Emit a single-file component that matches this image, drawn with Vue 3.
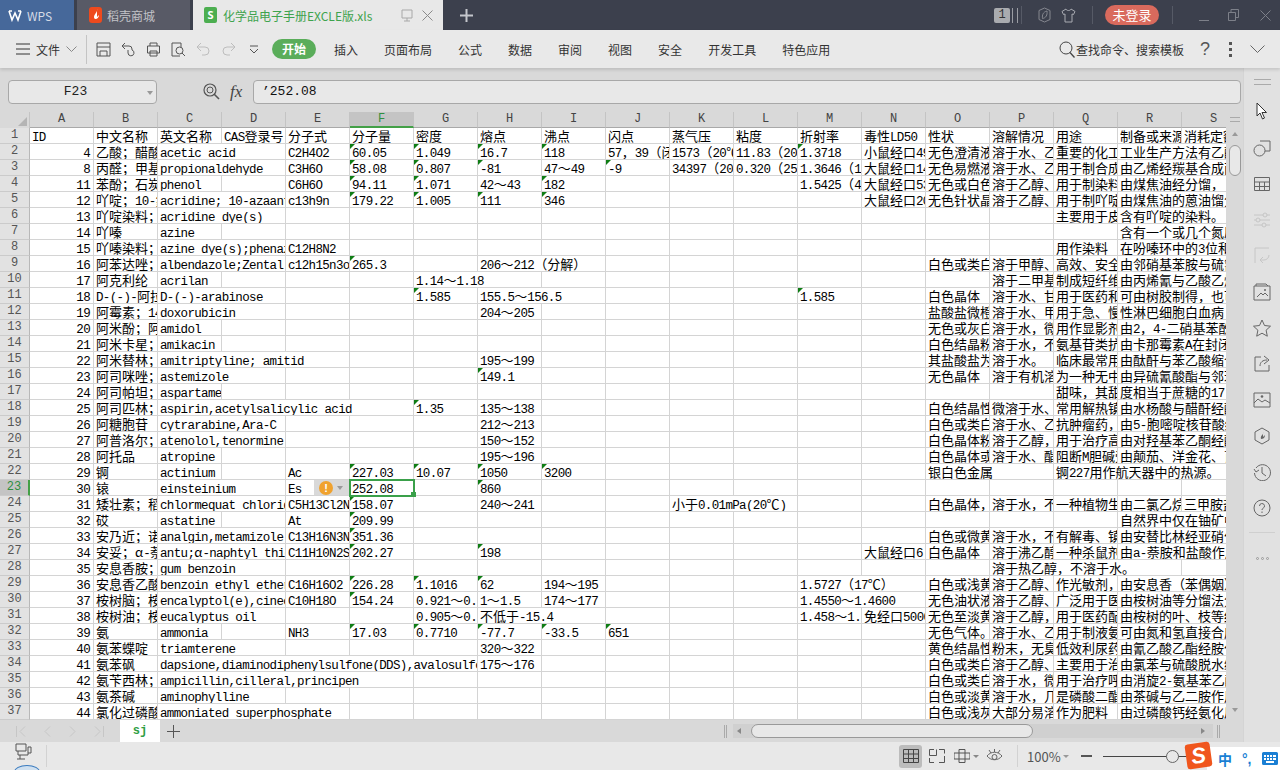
<template>
  <div class="app">
    <div class="titlebar">
      <div class="tab tab-wps">
        <svg width="14" height="14" viewBox="0 0 14 14"><path d="M1 3l3 9 3-7 3 7 3-9M1 3h3M10 3h3" fill="none" stroke="#fff" stroke-width="1.6"/></svg>
        <span>WPS</span>
      </div>
      <div class="tab tab-shop">
        <span class="shop-icon"><svg width="8" height="12" viewBox="0 0 8 12"><path d="M5 0C6 3 2 5 2 8c0 1 .6 2 1.5 2C5.500 10 7 8 7 6L5 8z" fill="#fff"/></svg></span>
        <span>稻壳商城</span>
      </div>
      <div class="tab tab-doc">
        <span class="doc-icon">S</span>
        <span class="doc-name">化学品电子手册EXCLE版.xls</span>
        <svg class="doc-mon" width="12" height="13" viewBox="0 0 12 13"><path d="M1 1h10v8H1zM6 9v3M3 12h6" fill="none" stroke="#a8a8a8"/></svg>
        <svg class="doc-x" width="11" height="11" viewBox="0 0 11 11"><path d="M.5.5l10 10M10.500.5l-10 10" stroke="#8a8a8a" fill="none"/></svg>
      </div>
      <svg class="plus" width="13" height="13" viewBox="0 0 13 13"><path d="M6.500 0v13M0 6.500h13" stroke="#c4c6cc" stroke-width="2" fill="none"/></svg>
      <div class="spring"></div>
      <span class="badge-one">1</span>
      <span class="stripes"></span>
      <span class="tb-div"></span>
      <svg class="tb-ic1" width="13" height="16" viewBox="0 0 13 16"><path d="M6.500 1L12 3.500v9L6.500 15 1 12.500v-9zM9 4C5 5 4 8 4.500 11.500 8 11 9.500 8 9 4z" fill="none" stroke="#85878f"/></svg>
      <svg class="tb-ic2" width="15" height="15" viewBox="0 0 15 15"><path d="M5 1L1 3.500l1.500 3L4 6v8h7V6l1.500.5L14 3.500 10 1c-.5 2-4.500 2-5 0z" fill="none" stroke="#a9abb2"/></svg>
      <span class="tb-div tb-div2"></span>
      <span class="login">未登录</span>
      <span class="tb-div tb-div3"></span>
      <svg class="win1" width="11" height="11" viewBox="0 0 11 11"><path d="M0 10.500h10" stroke="#7d8089"/></svg>
      <svg class="win2" width="11" height="12" viewBox="0 0 11 12"><path d="M.5 3.500h7v8h-7zM3 3.500V.5h7.500v8H7.500" fill="none" stroke="#7d8089"/></svg>
      <svg class="win3" width="11" height="11" viewBox="0 0 11 11"><path d="M.5.5l10 10M10.500.5l-10 10" stroke="#7d8089" fill="none"/></svg>
    </div>

    <div class="ribbon">
      <svg class="burger" width="15" height="12" viewBox="0 0 15 12"><path d="M0 1h14M0 6h14M0 11h14" stroke="#333" fill="none"/></svg>
      <span class="rb-file">文件</span>
      <svg class="rb-chev" width="11" height="6" viewBox="0 0 11 6"><path d="M.5.5l5 5 5-5" stroke="#888" fill="none"/></svg>
      <span class="rb-div"></span>
      <div class="qa">
        <svg width="15" height="15" viewBox="0 0 15 15"><path d="M1 1h13v13H1zM1 5h13M4 14V9h7v5" fill="none" stroke="#555"/></svg>
        <svg width="15" height="15" viewBox="0 0 15 15"><path d="M1 4h7a3 3 0 0 1 3 3v1a3 3 0 1 1-4 3V8M4 1L1 4l3 3" fill="none" stroke="#555"/></svg>
        <svg width="15" height="15" viewBox="0 0 15 15"><path d="M4 4V1h7v3M1.500 4h12v7h-12zM4 9h7v5H4z" fill="none" stroke="#555"/></svg>
        <svg width="15" height="15" viewBox="0 0 15 15"><path d="M9 14H1V1h9v4" fill="none" stroke="#555"/><circle cx="8.500" cy="8.500" r="3.500" fill="none" stroke="#555"/><path d="M11 11l3 3" stroke="#555"/></svg>
        <svg width="15" height="15" viewBox="0 0 15 15"><path d="M5 1L1 5l4 4M1 5h8a4 4 0 0 1 0 8H6" fill="none" stroke="#bdbdbd"/></svg>
        <svg width="15" height="15" viewBox="0 0 15 15"><path d="M10 1l4 4-4 4M14 5H6a4 4 0 0 0 0 8h3" fill="none" stroke="#bdbdbd"/></svg>
        <svg width="15" height="15" viewBox="0 0 15 15"><path d="M4 4h8M4 7l4 4 4-4" fill="none" stroke="#555"/></svg>
      </div>
      <span class="pill">开始</span>
      <nav class="menus">
        <span v-for="m in menus" :key="m">{{ m }}</span>
      </nav>
      <div class="spring"></div>
      <svg width="16" height="17" viewBox="0 0 16 17"><circle cx="7" cy="7" r="6" fill="none" stroke="#444"/><path d="M11 11.500l4.500 5" stroke="#444" stroke-width="1.300"/></svg>
      <span class="rb-search">查找命令、搜索模板</span>
      <span class="rb-help">?</span>
      <svg class="rb-dots" width="3" height="15" viewBox="0 0 3 15"><path d="M0 0h3v3H0zM0 6h3v3H0zM0 12h3v3H0z" fill="#555"/></svg>
      <svg class="rb-last" width="15" height="8" viewBox="0 0 15 8"><path d="M.5.5l7 7 7-7" stroke="#666" fill="none"/></svg>
    </div>

    <div class="body">
      <div class="main">
        <div class="formula">
          <div class="namebox"><span>F23</span><i class="nb-caret"></i></div>
          <svg class="fx-zoom" width="17" height="17" viewBox="0 0 17 17"><circle cx="7" cy="7" r="6" fill="none" stroke="#555" stroke-width="1.200"/><circle cx="7" cy="7" r="3" fill="none" stroke="#555"/><path d="M11 11l5 5" stroke="#555" stroke-width="1.600"/></svg>
          <span class="fx">fx</span>
          <div class="fx-input">’252.08</div>
        </div>

        <div class="sheet">
          <div class="sheet-area">
            <div class="heads">
              <div class="corner"><i></i></div>
              <span v-for="(l, i) in letters" :key="l" class="head" :class="{ on: i === 5 }">{{ l }}</span>
            </div>
            <div class="grid">
              <div v-for="(row, r) in rows" :key="r" class="row">
                <span class="rownum" :class="{ on: r === 22 }">{{ r + 1 }}</span>
                <span
                  v-for="cell in row"
                  :key="cell.col"
                  class="cell"
                  :class="{ tri: cell.tri, num: cell.num, sel: r === 22 && cell.col === 5 }"
                  :style="{ width: cell.span * 64 + 'px' }"
                >
                  <template v-for="(run, k) in cell.runs" :key="k"><span :class="run.cjk ? 'cjk' : 'asc'">{{ run.t }}</span></template>
                  <span v-if="r === 22 && cell.col === 4" class="warn">
                    <b>!</b><i></i>
                  </span>
                </span>
              </div>
            </div>
          </div>
          <div class="vscroll">
            <span class="v-grip"></span>
            <i class="v-up"></i>
            <span class="v-thumb"></span>
            <div class="spring"></div>
            <i class="v-down"></i>
          </div>
        </div>

        <div class="sheetbar">
          <div class="nav">
            <svg width="10" height="11" viewBox="0 0 10 11"><path d="M.5 0v11M9 .5l-5 5 5 5" fill="none" stroke="#c6c6c6"/></svg>
            <svg width="10" height="11" viewBox="0 0 10 11"><path d="M8 .5l-5 5 5 5" fill="none" stroke="#c6c6c6"/></svg>
            <svg width="10" height="11" viewBox="0 0 10 11"><path d="M2 .5l5 5-5 5" fill="none" stroke="#c6c6c6"/></svg>
            <svg width="10" height="11" viewBox="0 0 10 11"><path d="M9.500 0v11M1 .5l5 5-5 5" fill="none" stroke="#c6c6c6"/></svg>
          </div>
          <span class="sj">sj</span>
          <svg class="add" width="13" height="13" viewBox="0 0 13 13"><path d="M6.500 0v13M0 6.500h13" stroke="#555" fill="none"/></svg>
          <div class="spring"></div>
          <i class="h-grip"></i>
          <div class="hscroll">
            <i class="h-left"></i>
            <span class="h-thumb"></span>
            <div class="spring"></div>
            <i class="h-right"></i>
          </div>
          <i class="h-grip h-grip2"></i>
        </div>
      </div>

      <aside class="side">
        <span class="side-grip"></span>
        <svg class="cursor" width="12" height="18" viewBox="0 0 12 18"><path d="M1 1v13l3-3 2.500 6 2-1-2.500-5.500h4.500z" fill="#fff" stroke="#333"/></svg>
        <div class="side-icons">
          <svg width="18" height="18" viewBox="0 0 18 18"><circle cx="6.500" cy="11.500" r="5.500" fill="none" stroke="#666"/><path d="M7 2h10v10h-5" fill="none" stroke="#666"/></svg>
          <svg width="18" height="18" viewBox="0 0 18 18"><path d="M1.500 2.500h15v13h-15zM1.500 7h15M1.500 11.500h15M6.500 7v8.500M11.500 7v8.500" fill="none" stroke="#666"/></svg>
          <svg width="18" height="18" viewBox="0 0 18 18"><path d="M1 4h16M1 9h16M1 14h16" stroke="#c6c6c6" fill="none"/><circle cx="12" cy="4" r="2" fill="#e0e0e0" stroke="#c6c6c6"/><circle cx="5" cy="9" r="2" fill="#e0e0e0" stroke="#c6c6c6"/><circle cx="11" cy="14" r="2" fill="#e0e0e0" stroke="#c6c6c6"/></svg>
          <svg width="18" height="18" viewBox="0 0 18 18"><path d="M2 1h14M2 1v15M16 8a5 5 0 0 1-5 5H7M10 10l-3 3 3 3" fill="none" stroke="#c6c6c6"/></svg>
          <svg width="18" height="18" viewBox="0 0 18 18"><path d="M3 3V1h10l2 2M1 17V3h16v14zM4 14l4-4 2 2 2-2 3 3" fill="none" stroke="#666"/><circle cx="12" cy="7" r="1" fill="#666"/></svg>
          <svg width="18" height="18" viewBox="0 0 18 18"><path d="M9 1l2.500 5.500 6 .7-4.400 4 1.200 6L9 14.200 3.700 17.200l1.200-6-4.400-4 6-.7z" fill="none" stroke="#666"/></svg>
          <svg width="18" height="18" viewBox="0 0 18 18"><path d="M8 2H2v14h14v-6M7 11c0-4 3-6 7-6M11 1l5 4-5 4" fill="none" stroke="#666"/></svg>
          <svg width="18" height="18" viewBox="0 0 18 18"><path d="M1 2h16v14H1zM1 12l4-4 4 3 3-2 5 3" fill="none" stroke="#666"/><circle cx="9" cy="5.500" r="1.300" fill="#666"/></svg>
          <svg width="18" height="18" viewBox="0 0 18 18"><path d="M9 1l7 4v8l-7 4-7-4V5z" fill="none" stroke="#666"/><path d="M10 5c1 3-3 3-2 7 2 0 4-1 4-4l-2 2z" fill="#666"/></svg>
          <svg width="18" height="18" viewBox="0 0 18 18"><path d="M3 5a8 8 0 1 1-1.500 5M1 6l2 3 3-2M9 4v6l4 3" fill="none" stroke="#666"/></svg>
          <svg width="18" height="18" viewBox="0 0 18 18"><circle cx="9" cy="9" r="8" fill="none" stroke="#666"/><path d="M6.500 7a2.500 2.500 0 1 1 3.500 2.300c-.7.400-1 .9-1 1.700M9 12.500v1.500" fill="none" stroke="#666"/></svg>
        </div>
        <i class="side-line"></i>
        <div class="side-more"><i></i><i></i><i></i></div>
      </aside>
    </div>

    <div class="status">
      <svg class="st-ic" width="18" height="18" viewBox="0 0 18 18"><path d="M1 1h10v7H1zM3 8v4h10V4h3v6h-3M5 12v4M2 16h8" fill="none" stroke="#555"/></svg>
      <span class="st-bubble"></span>
      <span class="st-div"></span>
      <div class="spring"></div>
      <span class="view on"><svg width="16" height="14" viewBox="0 0 16 14"><path d="M.5.5h15v13H.5zM.5 5h15M.5 9.500h15M5.500.5v13M10.500.5v13" fill="none" stroke="#444"/></svg></span>
      <span class="view view2"><svg width="16" height="14" viewBox="0 0 16 14"><path d="M5 .5H.5v6h7v-6M10 .5h5.500v4M15.500 7v6.500H10M5 13.500H.5V9" fill="none" stroke="#555"/></svg></span>
      <span class="view view3"><svg width="16" height="14" viewBox="0 0 16 14"><path d="M5 .5h6v13H5zM0 4h16v6H0z" fill="none" stroke="#555"/></svg><i></i></span>
      <span class="view view4"><svg width="17" height="15" viewBox="0 0 17 15"><path d="M1 7c4-5 11-5 15 0-4 5-11 5-15 0zM3 1l2 3M8.500 0v3M14 1l-2 3" fill="none" stroke="#666"/><circle cx="8.500" cy="8" r="2.500" fill="none" stroke="#666"/></svg></span>
      <span class="st-div st-div2"></span>
      <span class="zoomtxt">100%</span><i class="zoomcaret"></i>
      <i class="minus"></i>
      <div class="slider"><i></i></div>
      <div class="ime">
        <span class="sogou"><b>S</b></span>
        <span class="ime-zh">中</span>
        <span class="ime-pt">°,</span>
        <svg width="16" height="13" viewBox="0 0 16 13"><path d="M0 1.500A1.500 1.500 0 0 1 1.500 0h13A1.500 1.500 0 0 1 16 1.500v10a1.500 1.500 0 0 1-1.500 1.500h-13A1.500 1.500 0 0 1 0 11.500z" fill="#1a7fd4"/><path d="M2 3h2v2H2zM5 3h2v2H5zM8 3h2v2H8zM11 3h3v2h-3zM2 6h2v2H2zM5 6h2v2H5zM8 6h2v2H8zM11 6h3v2h-3zM4 9h8v2H4z" fill="#fff"/></svg>
      </div>
    </div>
  </div>
</template>

<script setup>
const menus = ['插入', '页面布局', '公式', '数据', '审阅', '视图', '安全', '开发工具', '特色应用']
const letters = 'ABCDEFGHIJKLMNOPQRS'.split('')

// A..N # O..S, "|" between columns, "^" marks the green corner
const data = [
  'ID|中文名称|英文名称|CAS登录号|分子式|分子量|密度|熔点|沸点|闪点|蒸气压|粘度|折射率|毒性LD50（LD#性状|溶解情况|用途|制备或来源|消耗定额（吨）',
  '4|乙酸；醋酸|acetic acid||C2H4O2|^60.05|^1.049|^16.7|^118|57，39（闭杯）|1573（20℃）|11.83（20℃）|^1.3718|小鼠经口4960#无色澄清液体|溶于水、乙醇|重要的化工原料|工业生产方法有乙醛氧化',
  '8|丙醛；甲基乙醛|propionaldehyde||C3H6O|^58.08|^0.807|^-81|47～49|^-9|34397（20℃）|0.320（25℃）|1.3646（19℃）|大鼠经口1400#无色易燃液体|溶于水、乙醇|用于制合成树脂|由乙烯经羰基合成丙醛',
  '11|苯酚；石炭酸|phenol||C6H6O|^94.11|^1.071|42～43|^182||||1.5425（41℃）|大鼠经口530#无色或白色晶体|溶于乙醇、乙醚|用于制染料|由煤焦油经分馏，',
  '12|吖啶；10-氮杂蒽|acridine; 10-azaanthracene||c13h9n|^179.22|^1.005|^111|^346|||||大鼠经口2000#无色针状晶体|溶于乙醇、乙醚|用于制吖啶染料|由煤焦油的蒽油馏分中',
  '13|吖啶染料；|acridine dye(s)#||主要用于皮革|含有吖啶的染料。',
  '14|吖嗪|azine#|||含有一个或几个氮原子',
  '15|吖嗪染料；|azine dye(s);phenazine dyes||C12H8N2#||用作染料|在吩嗪环中的3位和7位',
  '16|阿苯达唑；|albendazole;Zental||c12h15n3o2s|^265.3||206～212（分解）#白色或类白色|溶于甲醇、冰醋酸|高效、安全的驱虫药|由邻硝基苯胺与硫氰酸',
  '17|阿克利纶|acrilan||||1.14～1.18#|溶于二甲基甲酰胺|制成短纤维|由丙烯氰与乙酸乙烯酯',
  '18|D-(-)-阿拉伯糖|D-(-)-arabinose||||^1.585|155.5～156.5|||||^1.585#白色晶体|溶于水、甘油|用于医药和食品|可由树胶制得，也可由',
  '19|阿霉素；14-羟|doxorubicin|||||204～205#盐酸盐微橙色|溶于水、甲醇|用于急、慢|性淋巴细胞白血病',
  '20|阿米酚；阿米多|amidol#无色或灰白色|溶于水，微溶|用作显影剂|由2，4-二硝基苯酚还原',
  '21|阿米卡星；|amikacin#白色结晶粉末|溶于水，不溶|氨基苷类抗生素|由卡那霉素A在封闭条件',
  '22|阿米替林；|amitriptyline; amitid|||||195～199#其盐酸盐为无色|溶于水。|临床最常用的|由酞酐与苯乙酸缩合',
  '23|阿司咪唑；|astemizole|||||^149.1#无色晶体|溶于有机溶剂|为一种无中枢|由异硫氰酸酯与邻苯二',
  '24|阿司帕坦；|aspartame#||甜味，其甜|度相当于蔗糖的17',
  '25|阿司匹林；|aspirin,acetylsalicylic acid||||^1.35|135～138#白色结晶性|微溶于水、|常用解热镇痛药|由水杨酸与醋酐经酯化',
  '26|阿糖胞苷|cytrarabine,Ara-C|||||212～213#白色或类白色|溶于水、乙醇|抗肿瘤药，|由5-胞嘧啶核苷酸经',
  '27|阿普洛尔；|atenolol,tenormine|||||150～152#白色晶体粉末|溶于乙醇，|用于治疗高血压|由对羟基苯乙酮经酯化',
  '28|阿托品|atropine|||||195～196#白色晶体或粉末|溶于水、酯类|阻断M胆碱受体|由颠茄、洋金花、莨菪',
  '29|锕|actinium||Ac|^227.03|^10.07|^1050|^3200#银白色金属||锕227用作航天器中的热源。',
  '30|锿|einsteinium||Es|252.08||^860',
  '31|矮壮素；稻|chlormequat chloride||C5H13Cl2N|^158.07||240～241|||小于0.01mPa(20℃)#白色晶体，|溶于水，不溶|一种植物生长|由二氯乙烷|三甲胺盐酸',
  '32|砹|astatine||At|^209.99#|||自然界中仅在铀矿中微量',
  '33|安乃近；诺|analgin,metamizole||C13H16N3NaO|^351.36#白色或微黄色|溶于水，不溶|有解毒、镇痛|由安替比林经亚硝化还原',
  '34|安妥；α-萘|antu;α-naphtyl thiourea||C11H10N2S|^202.27||^198||||||大鼠经口6#白色晶体|溶于沸乙醇中|一种杀鼠剂|由a-萘胺和盐酸作用',
  '35|安息香胺；|gum benzoin#|溶于热乙醇，不溶于水。',
  '36|安息香乙酸|benzoin ethyl ether||C16H16O2|^226.28|^1.1016|^62|194～195||||1.5727（17℃）#白色或浅黄色|溶于乙醇、乙醚|作光敏剂，|由安息香（苯偶姻）经',
  '37|桉树脑；桉|encalyptol(e),cineole||C10H18O|^154.24|0.921～0.923|1～1.5|174～177||||1.4550～1.4600#无色油状液体|溶于乙醇、乙醚|广泛用于医药|由桉树油等分馏法分离',
  '38|桉树油；桉|eucalyptus oil||||0.905～0.925|不低于-15.4|||||1.458～1.470|免经口5000#无色至淡黄色|溶于乙醇，不溶|用于医药配制|由桉树的叶、枝等经蒸',
  '39|氨|ammonia||NH3|^17.03|^0.7710|^-77.7|^-33.5|^651#无色气体。|溶于水、乙醇|用于制液氨|可由氮和氢直接合成。',
  '40|氨苯蝶啶|triamterene|||||320～322#黄色结晶性|粉末，无臭，|低效利尿药|由氰乙酸乙酯经胺化',
  '41|氨苯砜|dapsione,diaminodiphenylsulfone(DDS),avalosulfon|||||175～176#白色或类白色|溶于乙醇、丙酮|主要用于治疗|由氯苯与硫酸脱水缩合',
  '42|氨苄西林；|ampicillin,cilleral,principen#白色或类白色|溶于水，微溶|用于治疗呼吸|由消旋2-氨基苯乙酸',
  '43|氨茶碱|aminophylline#白色或淡黄色|溶于水，几乎|是磷酸二酯酶|由茶碱与乙二胺作用',
  '44|氯化过磷酸|ammoniated superphosphate#白色或浅灰色|大部分易溶于水|作为肥料|由过磷酸钙经氨化后'
]

const textWidth = (s) => {
  let w = 0
  for (const ch of s) w += ch.charCodeAt(0) < 128 ? 6.87 : 13
  return w
}

const toRuns = (s) =>
  (s.match(/[\x00-\x7f]+|[^\x00-\x7f]+/g) || []).map((t) => ({ t, cjk: t.charCodeAt(0) > 127 }))

const buildRow = (line, r) => {
  const [left, right = ''] = line.split('#')
  const f = new Array(19).fill('')
  left.split('|').forEach((t, i) => { f[i] = t })
  right.split('|').forEach((t, i) => { f[14 + i] = t })

  const cells = []
  for (let c = 0; c < 19; c++) {
    const tri = f[c].startsWith('^')
    const text = tri ? f[c].slice(1) : f[c]
    let span = 1
    if (text && c > 0) {
      const want = Math.ceil(textWidth(text) / 64)
      while (span < want && c + span < 19 && !f[c + span]) span++
    }
    cells.push({ col: c, tri, num: c === 0 && r > 0, span, runs: toRuns(text) })
    c += span - 1
  }
  return cells
}

const rows = data.map(buildRow)
</script>

<style>
html, body { margin: 0; background: #e8e8e8; overflow: hidden; }
</style>

<style scoped>
.app {
  width: 1280px;
  height: 770px;
  display: flex;
  flex-direction: column;
  overflow: hidden;
  font-family: "Noto Sans CJK SC", "Noto Sans", sans-serif;
  font-size: 12px;
  color: #333;
}
.spring { flex: 1; }

.titlebar {
  height: 30px;
  background: #3c404d;
  display: flex;
  align-items: center;
  flex: none;
}
.tab {
  height: 30px;
  display: flex;
  align-items: center;
  box-sizing: border-box;
}
.tab-wps {
  width: 74px;
  background: #46689a;
  color: #d5dbe6;
  padding-left: 8px;
  gap: 5px;
}
.tab-shop {
  width: 113px;
  margin-left: 3px;
  background: #585a66;
  color: #c2c3c8;
  padding-left: 12px;
  gap: 5px;
}
.shop-icon {
  width: 13px;
  height: 16px;
  background: #ee4a1d;
  border-radius: 3px;
  display: flex;
  align-items: center;
  justify-content: center;
}
.tab-doc {
  width: 250px;
  margin-left: 3px;
  background: #e8e8e8;
  padding-left: 11px;
}
.doc-icon {
  width: 13px;
  height: 16px;
  background: #4cae50;
  border-radius: 2px;
  color: #fff;
  font: 700 11px/16px "Noto Sans", sans-serif;
  text-align: center;
}
.doc-name { color: #3ea34d; margin-left: 6px; width: 178px; white-space: nowrap; }
.doc-x { margin-left: 9px; }
.plus { margin-left: 17px; }
.badge-one {
  width: 16px;
  height: 15px;
  background: #a9abaf;
  color: #333;
  border-radius: 2px;
  font: 12px/15px "Liberation Mono", monospace;
  text-align: center;
}
.stripes {
  width: 4px;
  height: 15px;
  margin-left: 2px;
  border-left: 1px solid #9a9ca3;
  border-right: 1px solid #9a9ca3;
}
.tb-div { width: 1px; height: 18px; background: #565a66; margin-left: 3px; }
.tb-ic1 { margin-left: 16px; }
.tb-ic2 { margin-left: 10px; }
.tb-div2 { margin-left: 16px; }
.login {
  width: 54px;
  height: 20px;
  margin-left: 12px;
  border-radius: 10px;
  background: #d96a5d;
  color: #fff;
  line-height: 20px;
  text-align: center;
  font-size: 13px;
}
.tb-div3 { margin-left: 13px; }
.win1 { margin-left: 26px; }
.win2 { margin-left: 18px; }
.win3 { margin-left: 21px; margin-right: 9px; }

.ribbon {
  height: 38px;
  flex: none;
  background: #e9e9e9;
  display: flex;
  align-items: center;
  position: relative;
  box-shadow: 0 2px 3px rgba(0, 0, 0, 0.12);
  z-index: 2;
}
.burger { margin-left: 16px; }
.rb-file { margin-left: 5px; font-size: 12px; }
.rb-chev { margin-left: 6px; }
.rb-div { width: 1px; height: 29px; background: #c4c4c4; margin-left: 9px; }
.qa { display: flex; gap: 10px; margin-left: 9px; align-items: center; }
.pill {
  width: 44px;
  height: 20px;
  margin-left: 11px;
  border-radius: 10px;
  background: #5aad5a;
  color: #fff;
  text-align: center;
  line-height: 20px;
  font-weight: 700;
}
.menus { display: flex; gap: 26px; margin-left: 18px; }
.rb-search { margin-left: 1px; margin-right: 14px; }
.rb-help { font: 18px "Liberation Sans", sans-serif; color: #555; width: 14px; text-align: center; }
.rb-dots { margin-left: 17px; }
.rb-last { margin-left: 18px; margin-right: 15px; }

.body { flex: 1; display: flex; min-height: 0; }
.main { width: 1243px; display: flex; flex-direction: column; background: #d9d9d9; }

.formula {
  height: 44px;
  flex: none;
  display: flex;
  align-items: center;
  box-sizing: border-box;
  padding: 3px 2px 0 8px;
}
.namebox {
  width: 149px;
  height: 24px;
  box-sizing: border-box;
  border: 1px solid #a8a8a8;
  border-radius: 4px;
  background: #e8e8e8;
  display: flex;
  align-items: center;
  font: 13px "Liberation Mono", monospace;
  color: #222;
  position: relative;
}
.namebox span { width: 100%; text-align: center; margin-right: 14px; }
.nb-caret {
  position: absolute;
  right: 3px;
  top: 10px;
  border: 3px solid transparent;
  border-top: 4px solid #999;
}
.fx-zoom { margin-left: 46px; }
.fx {
  width: 16px;
  margin-left: 10px;
  font: italic 17px "Liberation Serif", serif;
  color: #444;
}
.fx-input {
  width: 988px;
  height: 24px;
  margin-left: 7px;
  box-sizing: border-box;
  border: 1px solid #a8a8a8;
  border-radius: 4px;
  background: #e8e8e8;
  padding-left: 8px;
  font: 13px/22px "Liberation Mono", monospace;
  color: #111;
}

.sheet { flex: 1; display: flex; min-height: 0; }
.sheet-area { width: 1226px; overflow: hidden; }
.heads { display: flex; height: 16px; background: #d9d9d9; }
.corner { width: 30px; flex: none; position: relative; box-sizing: border-box; border-right: 1px solid #c4c4c4; }
.corner i {
  position: absolute;
  right: 2px;
  bottom: 2px;
  border-style: solid;
  border-width: 0 0 9px 9px;
  border-color: transparent transparent #b4b4b4 transparent;
}
.head {
  width: 64px;
  flex: none;
  box-sizing: border-box;
  border-right: 1px solid #c4c4c4;
  border-bottom: 1px solid #a9a9a9;
  text-align: center;
  font: 12px/15px "Liberation Mono", monospace;
  color: #444;
}
.head.on {
  background: #c4c4c4;
  border-bottom: 2px solid #43a047;
  color: #2f8f3f;
}
.grid { background: #fff; width: 1246px; }
.row { display: flex; height: 16px; }
.rownum {
  width: 30px;
  flex: none;
  box-sizing: border-box;
  background: #e2e2e2;
  border-right: 1px solid #b8b8b8;
  border-bottom: 1px solid #cbcbcb;
  text-align: center;
  font: 12px/15px "Liberation Mono", monospace;
  color: #555;
}
.rownum.on {
  background: #c4c4c4;
  border-right: 2px solid #43a047;
  color: #2f8f3f;
}
.cell {
  flex: none;
  height: 16px;
  box-sizing: border-box;
  border-right: 1px solid #d4d4d4;
  border-bottom: 1px solid #d4d4d4;
  padding-left: 2px;
  white-space: nowrap;
  overflow: hidden;
  line-height: 16px;
  color: #000;
  position: relative;
}
.cell.num { text-align: right; padding: 0 3px 0 0; }
.cell.tri::before {
  content: "";
  position: absolute;
  left: 0;
  top: 0;
  border-style: solid;
  border-width: 5px 5px 0 0;
  border-color: #0f7d14 transparent transparent transparent;
}
.asc { font: 12.5px/16px "Liberation Mono", monospace; letter-spacing: -0.65px; }
.cjk { font: 13px/16px "Noto Sans CJK SC", sans-serif; }
.cell.sel { overflow: visible; z-index: 2; }
.cell.sel::after {
  content: "";
  position: absolute;
  left: -1px;
  top: -1px;
  width: 66px;
  height: 18px;
  box-sizing: border-box;
  border: 2px solid #3aa04a;
}
.cell.sel::before {
  content: "";
  position: absolute;
  right: -3px;
  bottom: -2px;
  width: 5px;
  height: 5px;
  background: #3aa04a;
  z-index: 1;
}
.warn {
  position: absolute;
  right: 0;
  top: 0;
  width: 35px;
  height: 16px;
  background: #d9d9d9;
  display: flex;
  align-items: center;
}
.warn b {
  width: 14px;
  height: 14px;
  margin-left: 5px;
  border-radius: 50%;
  background: #f0a22e;
  color: #fff;
  font: 700 11px/14px "Liberation Sans", sans-serif;
  text-align: center;
}
.warn i {
  margin-left: 4px;
  margin-top: 3px;
  border: 3px solid transparent;
  border-top: 4px solid #999;
}

.vscroll {
  width: 17px;
  flex: none;
  display: flex;
  flex-direction: column;
  align-items: center;
  box-sizing: border-box;
  padding-top: 5px;
}
.v-grip { width: 10px; height: 3px; border-top: 1px solid #aaa; border-bottom: 1px solid #aaa; }
.v-up {
  margin-top: 10px;
  border: 3px solid transparent;
  border-bottom: 4px solid #999;
  border-top: 0;
}
.v-thumb {
  width: 12px;
  height: 31px;
  margin-top: 9px;
  border: 1px solid #999;
  border-radius: 6px;
  background: #e8e8e8;
  box-sizing: border-box;
}
.v-down {
  margin-bottom: 8px;
  border: 3px solid transparent;
  border-top: 4px solid #999;
  border-bottom: 0;
}

.sheetbar {
  height: 22px;
  flex: none;
  display: flex;
  align-items: center;
  position: relative;
}
.nav { display: flex; gap: 16px; margin-left: 16px; width: 104px; }
.sj {
  width: 40px;
  height: 22px;
  background: #fff;
  color: #2f9e44;
  text-align: center;
  font: 700 12px/22px "Liberation Mono", monospace;
}
.add { margin-left: 7px; }
.h-grip { width: 3px; height: 13px; border-left: 1px solid #aaa; border-right: 1px solid #aaa; box-sizing: border-box; }
.hscroll {
  width: 480px;
  height: 14px;
  margin-left: 6px;
  display: flex;
  align-items: center;
  background: #d0d0d0;
  box-sizing: border-box;
}
.h-left {
  margin-left: 4px;
  border: 3px solid transparent;
  border-right: 4px solid #888;
  border-left: 0;
}
.h-thumb {
  width: 282px;
  height: 14px;
  margin-left: 10px;
  border: 1px solid #999;
  border-radius: 7px;
  background: #e8e8e8;
  box-sizing: border-box;
}
.h-right {
  margin-right: 8px;
  border: 3px solid transparent;
  border-left: 4px solid #888;
  border-right: 0;
}
.h-grip2 { margin-left: 4px; margin-right: 23px; }

.side {
  flex: 1;
  background: #e1e1e1;
  border-left: 1px solid #d4d4d4;
  display: flex;
  flex-direction: column;
  align-items: center;
  padding-top: 11px;
  position: relative;
}
.side-grip { width: 17px; height: 4px; border-top: 1px solid #aaa; border-bottom: 1px solid #aaa; }
.cursor { position: absolute; left: 12px; top: 34px; }
.side-icons { display: flex; flex-direction: column; gap: 18px; margin-top: 54px; }
.side-icons svg { display: block; }
.side-line { width: 26px; height: 1px; background: #cfcfcf; margin-top: 15px; }
.side-more { display: flex; gap: 2px; margin-top: 24px; }
.side-more i { width: 3px; height: 3px; border: 1px solid #999; border-radius: 50%; box-sizing: border-box; }

.status {
  height: 28px;
  flex: none;
  background: #e8e8e8;
  display: flex;
  align-items: center;
  position: relative;
}
.st-ic { margin-left: 15px; margin-top: -9px; }
.st-bubble {
  position: absolute;
  left: 14px;
  top: 23px;
  width: 26px;
  height: 14px;
  border: 1px solid #3a7bbf;
  border-radius: 50%;
  background: #cfe0f0;
  box-sizing: border-box;
}
.st-div { width: 1px; height: 22px; background: #d2d2d2; margin-left: 13px; }
.view {
  width: 23px;
  height: 23px;
  border-radius: 3px;
  display: flex;
  align-items: center;
  justify-content: center;
  position: relative;
}
.view.on { background: #bcbcbc; }
.view2 { margin-left: 3px; }
.view3 { margin-left: 2px; }
.view3 i {
  position: absolute;
  right: -6px;
  top: 10px;
  border: 3px solid transparent;
  border-top: 3px solid #888;
}
.view4 { margin-left: 10px; }
.st-div2 { margin-left: 11px; }
.zoomtxt { margin-left: 9px; color: #555; font-size: 13px; width: 32px; }
.zoomcaret {
  margin-left: 4px;
  margin-top: 3px;
  border: 3px solid transparent;
  border-top: 3px solid #999;
}
.minus { width: 11px; height: 2px; background: #555; margin-left: 12px; }
.slider {
  width: 104px;
  height: 1px;
  background: #444;
  margin-left: 11px;
  position: relative;
}
.slider i {
  position: absolute;
  left: 63px;
  top: -6px;
  width: 13px;
  height: 13px;
  border: 1px solid #666;
  border-radius: 50%;
  background: #e8e8e8;
  box-sizing: border-box;
}
.ime {
  width: 73px;
  height: 23px;
  margin-top: 5px;
  background: #fff;
  display: flex;
  align-items: center;
  position: relative;
  box-sizing: border-box;
  padding-left: 11px;
}
.sogou {
  position: absolute;
  left: -21px;
  top: -4px;
  width: 25px;
  height: 25px;
  background: #f0561d;
  transform: rotate(-8deg);
  border-radius: 3px;
  color: #fff;
  text-align: center;
}
.sogou b { font: italic 700 22px/25px "Liberation Sans", sans-serif; }
.ime-zh { color: #1a7fd4; font-size: 14px; font-weight: 700; width: 24px; }
.ime-pt { color: #1a7fd4; font: 700 14px "Liberation Sans", sans-serif; width: 20px; }
</style>
